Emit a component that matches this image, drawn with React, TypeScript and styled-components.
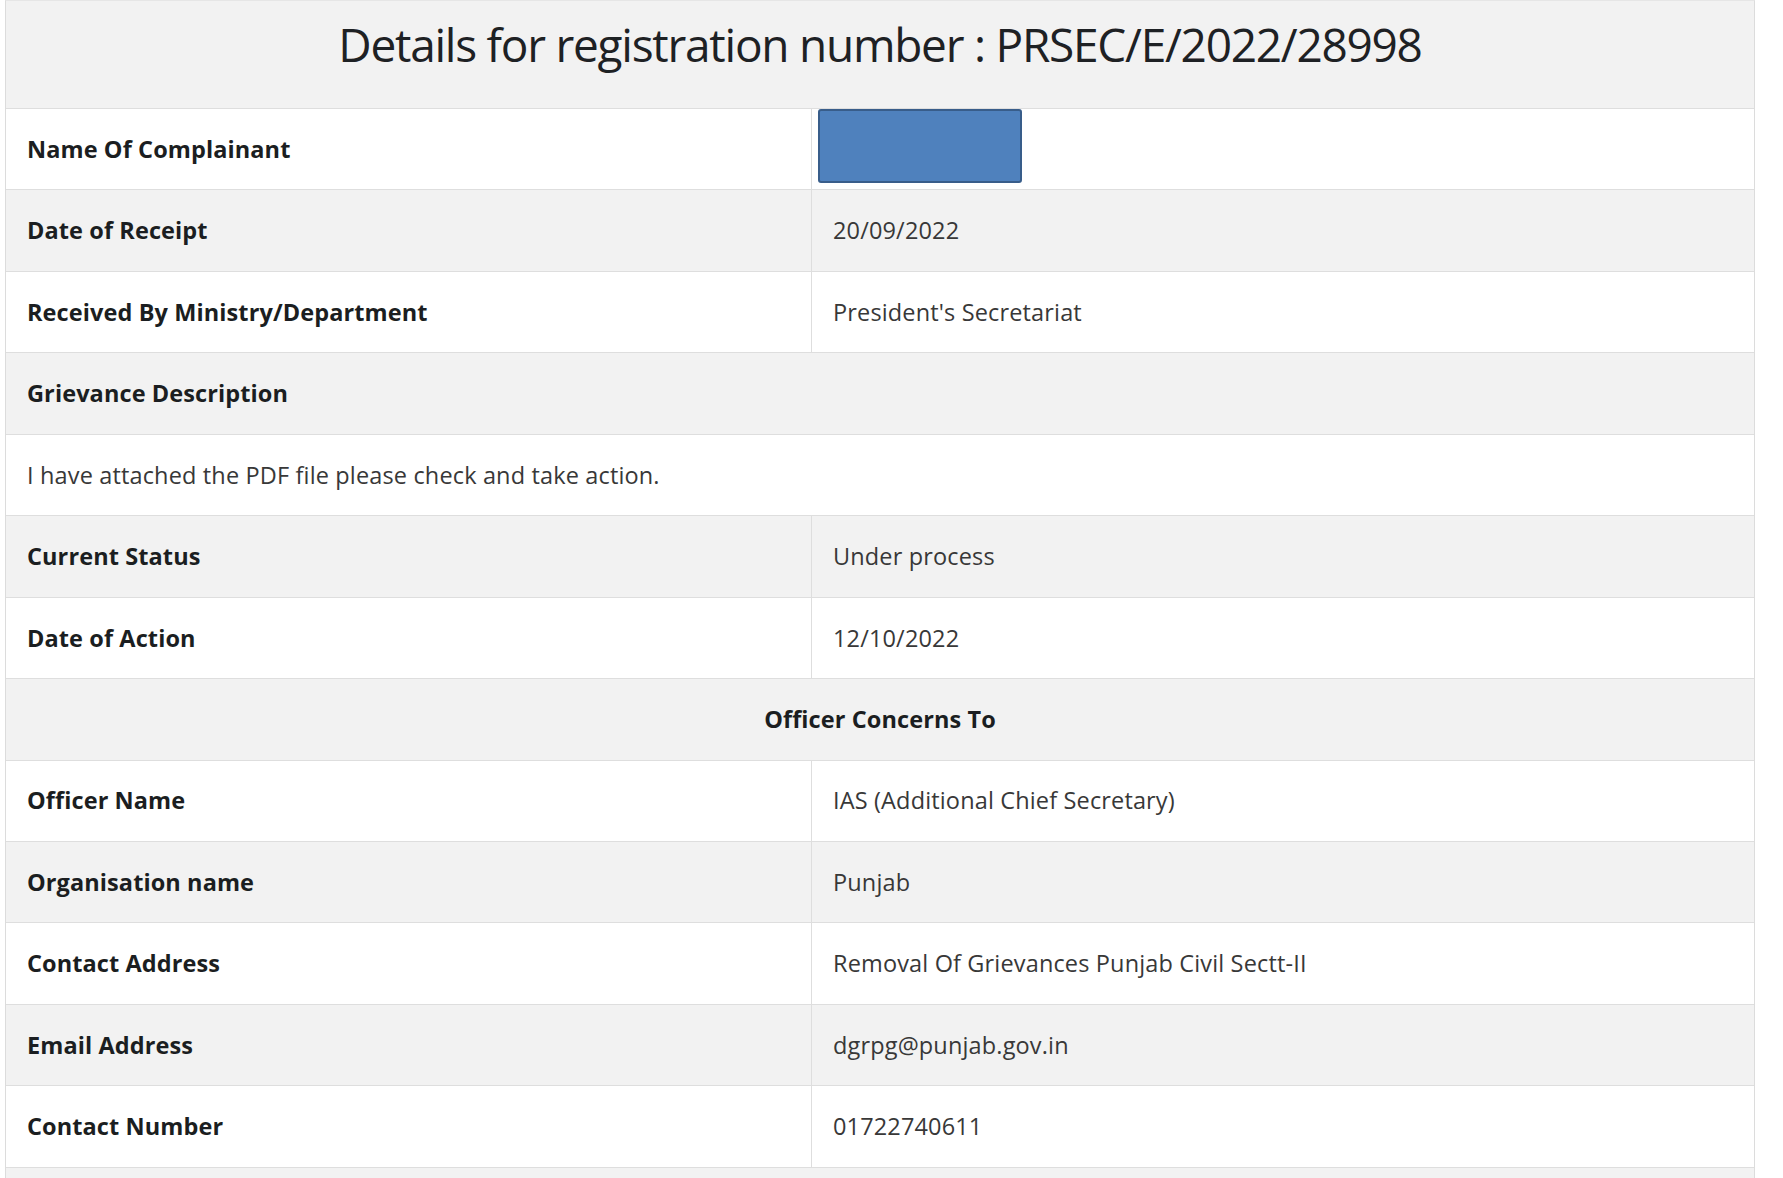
import React from "react";
import styled, { createGlobalStyle, css } from "styled-components";

const GlobalStyle = createGlobalStyle`
  html, body {
    margin: 0;
    padding: 0;
    background: #ffffff;
  }
  body {
    font-family: "Open Sans", "Noto Sans", "Liberation Sans", sans-serif;
    color: #212529;
  }
`;

const Page = styled.div`
  padding: 0 28px 0 5px;
  height: 1178px;
  overflow: hidden;
  box-sizing: border-box;
`;

const Table = styled.div`
  display: flex;
  flex-direction: column;
  width: 1750px;
  border-left: 1px solid #dcdcdc;
  border-right: 1px solid #dcdcdc;
  border-top: 1px solid #e6e6e6;
  box-sizing: border-box;
`;

const Title = styled.div`
  height: 108px;
  box-sizing: border-box;
  background: #f2f2f2;
  border-bottom: 1px solid #dedede;
  text-align: center;
  padding-top: 16px;
  font-size: 46px;
  letter-spacing: -1.25px;
  line-height: 1.2;
  font-weight: 400;
  color: #1e2124;
`;

const Row = styled.div<{ $shade: boolean; $full?: boolean }>`
  display: grid;
  grid-template-columns: ${(p) => (p.$full ? "1fr" : "806px 1fr")};
  height: 81.45px;
  box-sizing: border-box;
  border-bottom: 1px solid #dedede;
  background: ${(p) => (p.$shade ? "#f2f2f2" : "#ffffff")};
`;

const Cell = styled.div<{ $bold?: boolean; $center?: boolean; $divider?: boolean; $wide?: boolean }>`
  position: relative;
  display: flex;
  align-items: center;
  padding-left: 21px;
  font-size: 23.5px;
  line-height: 1.3;
  color: #383838;
  font-weight: 400;
  ${(p) =>
    p.$wide &&
    css`
      letter-spacing: 0.15px;
    `}
  ${(p) =>
    p.$bold &&
    css`
      font-weight: 700;
      color: #1b1e21;
      letter-spacing: 0.1px;
    `}
  ${(p) =>
    p.$center &&
    css`
      justify-content: center;
      padding-left: 0;
    `}
  ${(p) =>
    p.$divider &&
    css`
      border-right: 1px solid #dedede;
    `}
`;

const Redaction = styled.div`
  position: absolute;
  top: 0;
  left: 6px;
  width: 204px;
  height: 74px;
  box-sizing: border-box;
  background: #4f81bd;
  border: 2px solid #385d8a;
  border-radius: 3px;
`;

type Item =
  | { kind: "pair"; label: string; value?: string; redacted?: boolean }
  | { kind: "full"; text: string; bold?: boolean; center?: boolean }
  | { kind: "empty" };

const items: Item[] = [
  { kind: "pair", label: "Name Of Complainant", redacted: true },
  { kind: "pair", label: "Date of Receipt", value: "20/09/2022" },
  { kind: "pair", label: "Received By Ministry/Department", value: "President's Secretariat" },
  { kind: "full", text: "Grievance Description", bold: true },
  { kind: "full", text: "I have attached the PDF file please check and take action." },
  { kind: "pair", label: "Current Status", value: "Under process" },
  { kind: "pair", label: "Date of Action", value: "12/10/2022" },
  { kind: "full", text: "Officer Concerns To", bold: true, center: true },
  { kind: "pair", label: "Officer Name", value: "IAS (Additional Chief Secretary)" },
  { kind: "pair", label: "Organisation name", value: "Punjab" },
  { kind: "pair", label: "Contact Address", value: "Removal Of Grievances Punjab Civil Sectt-II" },
  { kind: "pair", label: "Email Address", value: "dgrpg@punjab.gov.in" },
  { kind: "pair", label: "Contact Number", value: "01722740611" },
  { kind: "empty" },
];

export default function App() {
  return (
    <>
      <GlobalStyle />
      <Page>
        <Table>
          <Title>Details for registration number : PRSEC/E/2022/28998</Title>
          {items.map((item, i) => {
            const shade = i % 2 === 1;
            if (item.kind === "pair") {
              return (
                <Row key={i} $shade={shade}>
                  <Cell $bold $divider>
                    {item.label}
                  </Cell>
                  <Cell $wide>
                    {item.redacted ? <Redaction /> : item.value}
                  </Cell>
                </Row>
              );
            }
            if (item.kind === "full") {
              return (
                <Row key={i} $shade={shade} $full>
                  <Cell $bold={item.bold} $center={item.center} $wide={!item.bold}>
                    {item.text}
                  </Cell>
                </Row>
              );
            }
            return <Row key={i} $shade={shade} $full />;
          })}
        </Table>
      </Page>
    </>
  );
}
